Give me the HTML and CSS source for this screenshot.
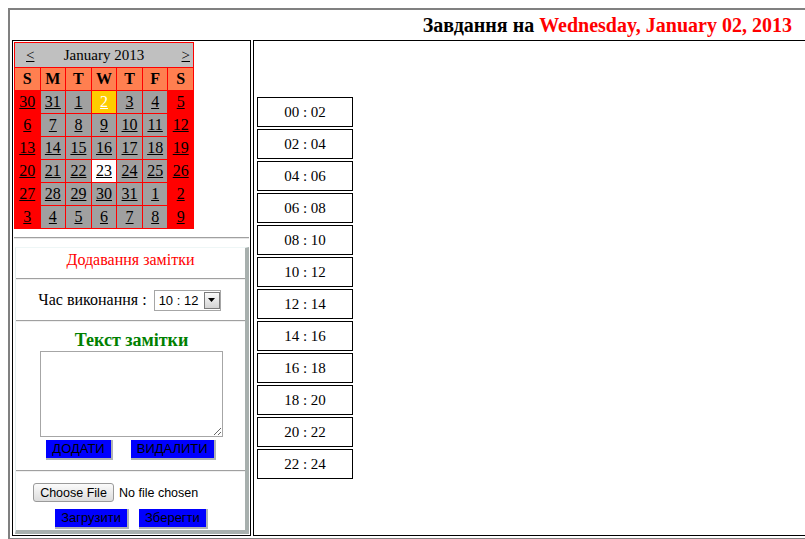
FILE: index.html
```html
<!DOCTYPE html>
<html lang="uk">
<head>
<meta charset="utf-8">
<title>Завдання</title>
<link rel="stylesheet" href="styles.css">
</head>
<body>
<div class="wrap">
  <div class="header">Завдання на <span class="date">Wednesday, January 02, 2013</span></div>
  <div class="row">
    <div class="left">
      <div class="cal">
        <div class="cal-head">
          <a class="nav nav-prev" href="#">&lt;</a>
          <span class="month">January 2013</span>
          <a class="nav nav-next" href="#">&gt;</a>
        </div>
        <div class="dn">S</div><div class="dn">M</div><div class="dn">T</div><div class="dn">W</div><div class="dn">T</div><div class="dn">F</div><div class="dn">S</div>

        <div class="d we"><a href="#">30</a></div><div class="d"><a href="#">31</a></div><div class="d"><a href="#">1</a></div><div class="d today"><a href="#">2</a></div><div class="d"><a href="#">3</a></div><div class="d"><a href="#">4</a></div><div class="d we"><a href="#">5</a></div>
        <div class="d we"><a href="#">6</a></div><div class="d"><a href="#">7</a></div><div class="d"><a href="#">8</a></div><div class="d"><a href="#">9</a></div><div class="d"><a href="#">10</a></div><div class="d"><a href="#">11</a></div><div class="d we"><a href="#">12</a></div>
        <div class="d we"><a href="#">13</a></div><div class="d"><a href="#">14</a></div><div class="d"><a href="#">15</a></div><div class="d"><a href="#">16</a></div><div class="d"><a href="#">17</a></div><div class="d"><a href="#">18</a></div><div class="d we"><a href="#">19</a></div>
        <div class="d we"><a href="#">20</a></div><div class="d"><a href="#">21</a></div><div class="d"><a href="#">22</a></div><div class="d sel"><a href="#">23</a></div><div class="d"><a href="#">24</a></div><div class="d"><a href="#">25</a></div><div class="d we"><a href="#">26</a></div>
        <div class="d we"><a href="#">27</a></div><div class="d"><a href="#">28</a></div><div class="d"><a href="#">29</a></div><div class="d"><a href="#">30</a></div><div class="d"><a href="#">31</a></div><div class="d"><a href="#">1</a></div><div class="d we"><a href="#">2</a></div>
        <div class="d we"><a href="#">3</a></div><div class="d"><a href="#">4</a></div><div class="d"><a href="#">5</a></div><div class="d"><a href="#">6</a></div><div class="d"><a href="#">7</a></div><div class="d"><a href="#">8</a></div><div class="d we"><a href="#">9</a></div>
      </div>
      <hr class="cal-hr">
      <div class="panel">
        <div class="sec sec-title">Додавання замітки</div>
        <div class="sep"></div>
        <div class="sec sec-time">
          <span class="lbl">Час виконання :</span>
          <span class="selectbox">
            <select class="sel-time">
              <option>00 : 02</option><option>02 : 04</option><option>04 : 06</option><option>06 : 08</option>
              <option>08 : 10</option><option selected>10 : 12</option><option>12 : 14</option><option>14 : 16</option>
              <option>16 : 18</option><option>18 : 20</option><option>20 : 22</option><option>22 : 24</option>
            </select>
            <span class="arrow"><svg width="7" height="4" viewBox="0 0 7 4"><path d="M0 0H7L3.5 4Z" fill="#000"/></svg></span>
          </span>
        </div>
        <div class="sep"></div>
        <div class="sec sec-text">
          <div class="green">Текст замітки</div>
          <textarea class="note"></textarea>
          <div class="btns">
            <button class="btn">ДОДАТИ</button>
            <button class="btn">ВИДАЛИТИ</button>
          </div>
        </div>
        <div class="sep"></div>
        <div class="sec sec-file">
          <input class="file" type="file">
          <div class="btns btns-file">
            <button class="btn">Загрузити</button>
            <button class="btn">Зберегти</button>
          </div>
        </div>
      </div>
    </div>
    <div class="right">
      <div class="slots">
        <div class="slot">00 : 02</div>
        <div class="slot">02 : 04</div>
        <div class="slot">04 : 06</div>
        <div class="slot">06 : 08</div>
        <div class="slot">08 : 10</div>
        <div class="slot">10 : 12</div>
        <div class="slot">12 : 14</div>
        <div class="slot">14 : 16</div>
        <div class="slot">16 : 18</div>
        <div class="slot">18 : 20</div>
        <div class="slot">20 : 22</div>
        <div class="slot">22 : 24</div>
      </div>
    </div>
  </div>
</div>
</body>
</html>
```
FILE: styles.css
```css
html {
  overflow: hidden;
}
body {
  margin: 8px 0 8px 8px;
  font-family: "Liberation Serif", "Times New Roman", serif;
  font-size: 16px;
  color: #000;
  background: #fff;
}
.wrap {
  width: 812px;
  border: 2px solid #808080;
  padding: 2px;
}
.header {
  height: 26px;
  line-height: 26px;
  text-align: right;
  padding-right: 32px;
  font-weight: bold;
  font-size: 20px;
  margin-bottom: 2px;
}
.header .date {
  color: #ff0000;
}
.row {
  display: flex;
  gap: 2px;
}
.left {
  width: 235px;
  flex: none;
  border: 1px solid #000;
  padding: 1px;
}
.right {
  flex: 1;
  border: 1px solid #000;
  padding: 1px 1px 1px 3px;
  display: flex;
  align-items: center;
}

/* calendar */
.cal {
  width: 178px;
  border: 1px solid #ff0000;
  background: #ff0000;
  display: grid;
  grid-template-columns: repeat(7, 1fr);
  gap: 1px;
}
.cal a {
  color: #000;
}
.cal-head {
  grid-column: 1 / -1;
  background: #c0c0c0;
  height: 24px;
  line-height: 24px;
  font-size: 15px;
  display: grid;
  grid-template-columns: 1fr auto 1fr;
}
.nav-prev {
  justify-self: start;
  padding-left: 11px;
}
.nav-next {
  justify-self: end;
  padding-right: 3px;
}
.dn {
  background: #ff7f50;
  height: 22px;
  line-height: 22px;
  text-align: center;
  font-weight: bold;
}
.d {
  background: #a0a0a0;
  height: 22px;
  line-height: 22px;
  text-align: center;
}
.d.we {
  background: #ff0000;
}
.d.today {
  background: #ffcc00;
}
.d.today a {
  color: #fff;
}
.d.sel {
  background: #fff;
}
.cal-hr {
  margin: 8px 0;
  border: 0;
  border-top: 1px solid #a0a0a0;
  border-bottom: 1px solid #e6e6e6;
}

/* panel */
.panel {
  margin-left: 1px;
  border-top: 1px solid #eef6f6;
  border-left: 1px solid #e4eeee;
  border-right: 4px solid #a8b0ae;
  border-bottom: 4px solid #a8b0ae;
}
.sep {
  border-top: 1px solid #a0a0a0;
  border-bottom: 1px solid #f0f0f0;
}
.sec-title {
  height: 27px;
  padding-top: 3px;
  line-height: 18px;
  text-align: center;
  color: #ff0000;
}
.sec-time {
  height: 40px;
  display: flex;
  align-items: center;
  justify-content: center;
  gap: 7px;
  padding-right: 2px;
}
.selectbox {
  position: relative;
  display: inline-block;
  width: 67px;
  height: 21px;
}
.sel-time {
  appearance: none;
  -webkit-appearance: none;
  width: 67px;
  height: 21px;
  border: 1px solid #a6a6a6;
  background: #fff;
  font-family: "Liberation Sans", Arial, sans-serif;
  font-size: 13px;
  padding: 0 0 0 4px;
  margin: 0;
  color: #000;
}
.arrow {
  position: absolute;
  right: 1px;
  top: 2px;
  width: 14px;
  height: 15px;
  border: 1px solid #7a7a7a;
  background: linear-gradient(#fafafa, #d4d4d4);
  display: flex;
  align-items: center;
  justify-content: center;
  pointer-events: none;
}
.sec-text {
  padding: 8px 0 10px;
  display: flex;
  flex-direction: column;
  align-items: center;
}
.green {
  color: #008000;
  font-weight: bold;
  font-size: 18px;
  line-height: 20px;
  padding-left: 2px;
}
.note {
  display: block;
  width: 183px;
  height: 86px;
  box-sizing: border-box;
  border: 1px solid #a6a6a6;
  margin: 1px 0 0 1px;
  padding: 2px;
  resize: both;
}
.btns {
  display: flex;
  justify-content: center;
  gap: 18px;
  margin-top: 3px;
  padding-left: 1px;
}
.btn {
  height: 20px;
  padding: 0 6px;
  margin: 0;
  background: #0000ff;
  color: #000;
  border: 0;
  border-right: 2px solid #b0b4b4;
  border-bottom: 2px solid #b0b4b4;
  font-family: "Liberation Sans", Arial, sans-serif;
  font-size: 13px;
  line-height: 18px;
}
.sec-file {
  padding: 11px 0 0;
  height: 47px;
}
.file {
  display: block;
  margin-left: 17px;
  font-family: "Liberation Sans", Arial, sans-serif;
  font-size: 12.5px;
  color: #000;
  height: 19px;
}
.file::file-selector-button {
  width: 81px;
  height: 19px;
  margin: 0 5px 0 0;
  padding: 0;
  border: 1px solid #9a9a9a;
  border-radius: 3px;
  background: linear-gradient(#fbfbfb, #dcdcdc);
  font-family: "Liberation Sans", Arial, sans-serif;
  font-size: 12.5px;
  color: #000;
}
.btns-file {
  gap: 10px;
  margin-top: 7px;
  padding-left: 2px;
}

/* slots */
.slots {
  display: flex;
  flex-direction: column;
  gap: 2px;
}
.slot {
  width: 94px;
  height: 28px;
  border: 1px solid #000;
  display: flex;
  align-items: center;
  justify-content: center;
  font-size: 15px;
}
```
